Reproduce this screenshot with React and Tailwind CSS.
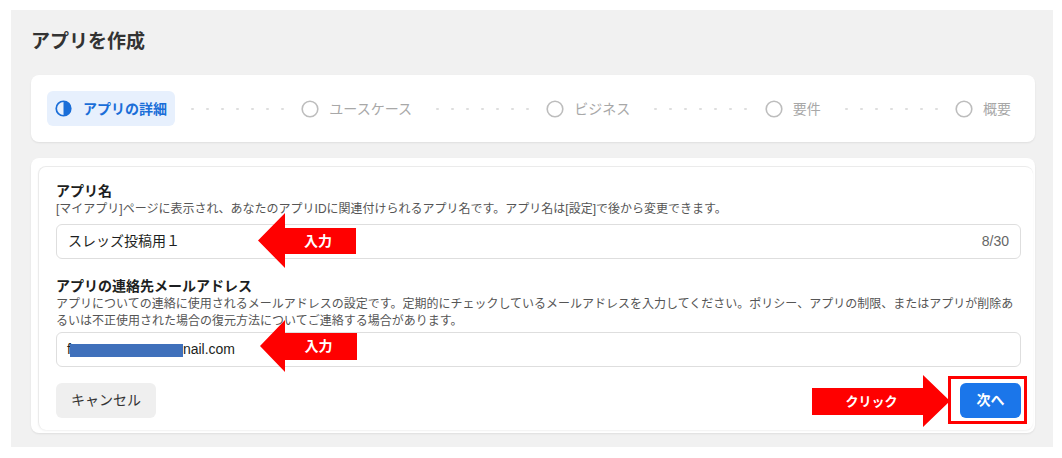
import React from "react";

function Connector() {
  return (
    <div className="flex-1 h-[6px] mx-[6px] bg-[radial-gradient(circle,#dedede_1px,transparent_1.5px)] bg-[length:15px_6px] bg-repeat-x bg-[position:4px_0]" />
  );
}

function Step({ label }) {
  return (
    <div className="flex items-center gap-[10px] px-2 h-[35px]">
      <svg width="18" height="18" viewBox="0 0 18 18">
        <circle cx="9" cy="9" r="7.8" fill="none" stroke="#bdbdbd" strokeWidth="1.6" />
      </svg>
      <span className="text-[14px] text-[#a8a8a8] leading-5">{label}</span>
    </div>
  );
}

export default function App() {
  return (
    <div className="relative w-[1062px] h-[458px] bg-white pt-[10px] pl-[11px] font-['Liberation_Sans','Noto_Sans_CJK_JP',sans-serif] text-[#1c1e21]">
      <div className="w-[1042px] h-[437px] bg-[#f1f1f1] pl-[20px] pr-[18px] pt-[20px]">
        <h1 className="text-[19px] font-bold leading-6 text-[#333]">アプリを作成</h1>

        <div className="mt-[21px] h-[67px] bg-white rounded-lg shadow-[0_1px_2px_rgba(0,0,0,0.08)] px-4 flex items-center">
          <div className="flex items-center gap-[11px] h-[35px] px-2 rounded-md bg-[#e7f0fd]">
            <svg width="17" height="17" viewBox="0 0 18 18">
              <circle cx="9" cy="9" r="7.7" fill="none" stroke="#1a6ed8" strokeWidth="1.8" />
              <path d="M9 1.3 A7.7 7.7 0 0 1 9 16.7 Z" fill="#1a6ed8" />
            </svg>
            <span className="text-[14px] font-bold text-[#1a6ed8] leading-5">アプリの詳細</span>
          </div>
          <Connector />
          <Step label="ユースケース" />
          <Connector />
          <Step label="ビジネス" />
          <Connector />
          <Step label="要件" />
          <Connector />
          <Step label="概要" />
        </div>

        <div className="mt-[16px] h-[275px] bg-white rounded-lg shadow-[0_1px_2px_rgba(0,0,0,0.08)] pl-[7px] pt-[8px] pr-[2px] pb-[3px]">
          <div className="h-full rounded-lg border-l border-t border-[#ebebeb] shadow-[0_1px_2px_rgba(0,0,0,0.06)] pl-[17px] pr-[12px] pt-[14px]">
            <div className="text-[14px] font-bold leading-5">アプリ名</div>
            <div className="text-[12px] leading-[17px] text-[#555]">
              [マイアプリ]ページに表示され、あなたのアプリIDに関連付けられるアプリ名です。アプリ名は[設定]で後から変更できます。
            </div>
            <div className="mt-[6px] h-[35px] rounded-md border border-[#dedede] flex items-center justify-between pl-[11px] pr-[11px]">
              <span className="text-[14px]">スレッズ投稿用１</span>
              <span className="text-[14px] text-[#666]">8/30</span>
            </div>

            <div className="mt-[17px] text-[14px] font-bold leading-5">アプリの連絡先メールアドレス</div>
            <div className="text-[12px] leading-[17px] text-[#555]">
              アプリについての連絡に使用されるメールアドレスの設定です。定期的にチェックしているメールアドレスを入力してください。ポリシー、アプリの制限、またはアプリが削除あるいは不正使用された場合の復元方法についてご連絡する場合があります。
            </div>
            <div className="mt-[2px] h-[35px] rounded-md border border-[#dedede] flex items-center pl-[10px]">
              <span className="text-[14px]">f</span>
              <span className="inline-block w-[113px] h-[13px] bg-[#3f70bb] mt-[2px] -ml-[1px]" />
              <span className="text-[14px]">nail.com</span>
            </div>

            <div className="mt-[16px] flex items-center justify-between">
              <button className="h-[35px] w-[100px] rounded-md bg-[#efefef] text-[14px] text-[#333]">キャンセル</button>
              <button className="h-[35px] w-[61px] rounded-md bg-[#1b76ea] text-[14px] font-bold text-white">次へ</button>
            </div>
          </div>
        </div>
      </div>

      {/* annotation overlays */}
      <div className="absolute left-[258px] top-[213px] w-[98px] h-[55px]">
        <svg width="98" height="55" viewBox="0 0 98 55" className="absolute inset-0">
          <polygon points="0,27.5 27,0 27,15 98,15 98,41 27,41 27,55" fill="#ff0000" />
        </svg>
        <span className="absolute left-[22px] right-0 top-[15px] h-[26px] flex items-center justify-center text-[14px] font-bold text-white">入力</span>
      </div>

      <div className="absolute left-[260px] top-[320px] w-[97px] h-[52px]">
        <svg width="97" height="52" viewBox="0 0 97 52" className="absolute inset-0">
          <polygon points="0,26 25,0 25,13 97,13 97,40 25,40 25,52" fill="#ff0000" />
        </svg>
        <span className="absolute left-[20px] right-0 top-[13px] h-[27px] flex items-center justify-center text-[14px] font-bold text-white">入力</span>
      </div>

      <div className="absolute left-[812px] top-[375px] w-[138px] h-[52px]">
        <svg width="138" height="52" viewBox="0 0 138 52" className="absolute inset-0">
          <polygon points="0,13 111,13 111,0 138,26 111,52 111,40 0,40" fill="#ff0000" />
        </svg>
        <span className="absolute left-[4px] w-[111px] top-[13px] h-[27px] flex items-center justify-center text-[13px] font-bold text-white">クリック</span>
      </div>

      <div className="absolute left-[948px] top-[376px] w-[79px] h-[48px] border-[3px] border-[#ff0000]" />
    </div>
  );
}
